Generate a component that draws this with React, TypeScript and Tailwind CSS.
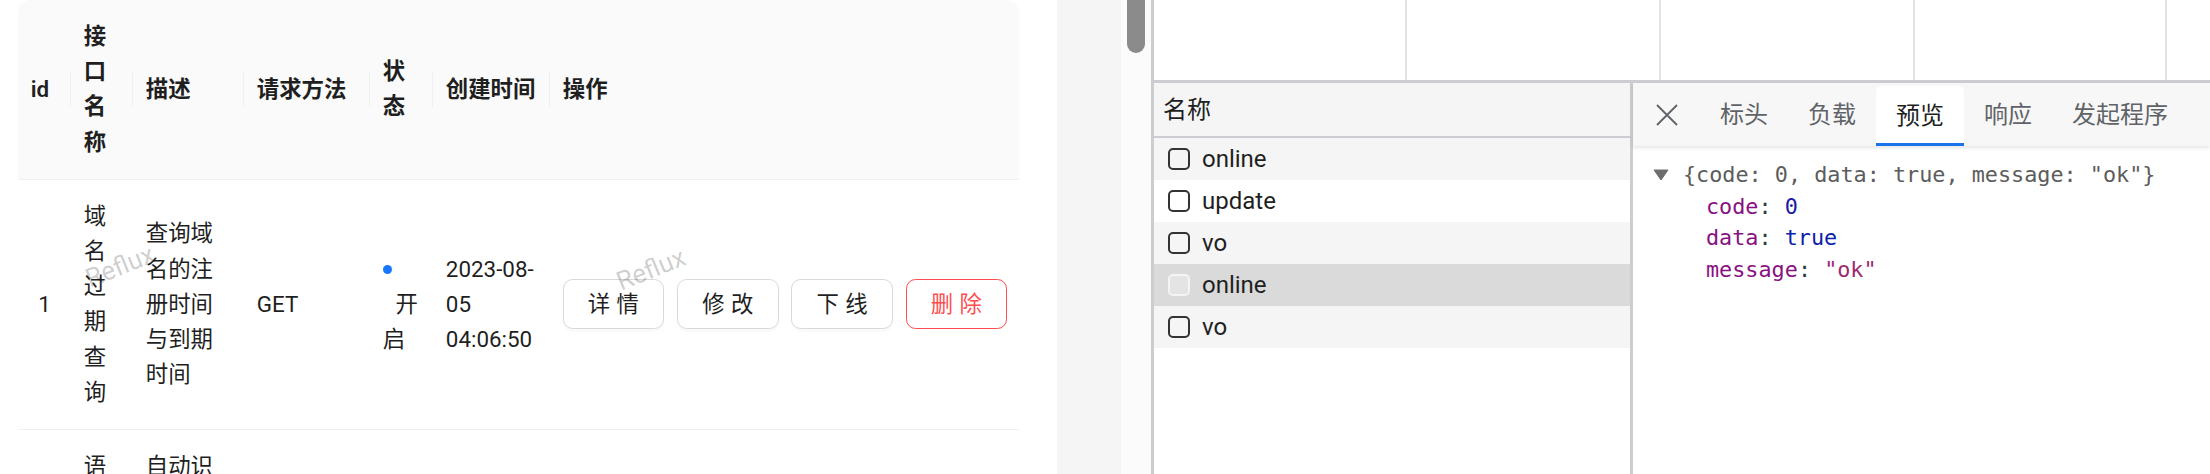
import React from 'react';

type Row = {
  id: number;
  name: string;
  desc: string;
  method: string;
  status: string;
  created: string;
};

const rows: Row[] = [
  { id: 1, name: '域名过期查询', desc: '查询域名的注册时间与到期时间', method: 'GET', status: '开启', created: '2023-08-05 04:06:50' },
  { id: 2, name: '语音转写服务', desc: '自动识别音频中的语音并转写为文字', method: 'POST', status: '开启', created: '2023-08-05 04:07:12' },
];

const headers = ['id', '接口名称', '描述', '请求方法', '状态', '创建时间', '操作'];

const thBase =
  "relative bg-[#fafafa] text-left font-semibold px-[12.8px] py-[19px] border-b border-[#f0f0f0] before:content-[''] before:absolute before:right-0 before:top-1/2 before:-translate-y-1/2 before:w-px before:h-[36px] before:bg-[#f0f0f0]";

const tdBase = 'px-[12.8px] py-[19px] border-b border-[#f0f0f0]';

const btnBase = 'shrink-0 whitespace-nowrap h-[50px] px-[24px] rounded-[9.6px] border bg-white tracking-[0.4px]';

const ApiTable: React.FC = () => (
  <table className="table-fixed border-separate border-spacing-0 w-[1001px] text-[22.4px] leading-[35.2px] text-[#1f1f1f]">
    <colgroup>
      <col className="w-[53px]" />
      <col className="w-[62px]" />
      <col className="w-[111px]" />
      <col className="w-[126px]" />
      <col className="w-[63px]" />
      <col className="w-[117px]" />
      <col className="w-[469px]" />
    </colgroup>
    <thead>
      <tr>
        {headers.map((h, i) => (
          <th
            key={h}
            className={`${thBase} ${i === 0 ? 'rounded-tl-[12.8px]' : ''} ${i === headers.length - 1 ? 'rounded-tr-[12.8px] before:hidden' : ''}`}
          >
            {h}
          </th>
        ))}
      </tr>
    </thead>
    <tbody>
      {rows.map((r) => (
        <tr key={r.id}>
          <td className={`${tdBase} text-center`}>{r.id}</td>
          <td className={tdBase}>{r.name}</td>
          <td className={tdBase}>{r.desc}</td>
          <td className={tdBase}>{r.method}</td>
          <td className={tdBase}>
            <span className="inline-block w-[9.6px] h-[9.6px] rounded-full bg-[#1677ff] align-middle relative -top-px" />
            <span className="ml-[12.8px]">{r.status}</span>
          </td>
          <td className={tdBase}>{r.created}</td>
          <td className={tdBase}>
            <div className="flex gap-[12.8px]">
              {['详 情', '修 改', '下 线'].map((t) => (
                <button
                  key={t}
                  className={`${btnBase} border-[#d9d9d9] text-[#1f1f1f] shadow-[0_3px_0_rgba(0,0,0,0.02)]`}
                >
                  {t}
                </button>
              ))}
              <button className={`${btnBase} border-[#ff4d4f] text-[#ff4d4f]`}>删 除</button>
            </div>
          </td>
        </tr>
      ))}
    </tbody>
  </table>
);

const PageArea: React.FC = () => (
  <div className="relative w-[1057px] h-full shrink-0 bg-white pl-[18px]">
    <ApiTable />
    {/* watermark */}
    <span className="absolute left-[84px] top-[251px] -rotate-[22deg] text-[26px] leading-[30px] text-black/20 pointer-events-none">
      Reflux
    </span>
    <span className="absolute left-[615px] top-[254px] -rotate-[22deg] text-[26px] leading-[30px] text-black/20 pointer-events-none">
      Reflux
    </span>
  </div>
);

const names = ['online', 'update', 'vo', 'online', 'vo'];

const RequestList: React.FC = () => (
  <div className="w-[479px] shrink-0 h-full border-r-[3px] border-[#cbcdd1] flex flex-col">
    <div className="h-[55px] shrink-0 bg-[#f5f5f5] border-b-2 border-[#cbcdd1] flex items-center pl-[9px] text-[24px] text-[#1f1f1f]">
      名称
    </div>
    {names.map((n, i) => {
      const selected = i === 3;
      const bg = selected ? 'bg-[#dadada]' : i % 2 === 0 ? 'bg-[#f5f5f5]' : 'bg-white';
      return (
        <div key={i} className={`h-[42px] shrink-0 flex items-center pl-[14px] gap-[12px] ${bg}`}>
          <span
            className={`w-[22px] h-[22px] rounded-[5px] border-2 ${selected ? 'border-[#f4f4f4] bg-[#e4e4e4]' : 'border-[#333333] bg-transparent'}`}
          />
          <span className="text-[24px] text-[#1f1f1f] leading-[42px]">{n}</span>
        </div>
      );
    })}
  </div>
);

const tabs = ['标头', '负载', '预览', '响应', '发起程序'];

const Preview: React.FC = () => (
  <div className="flex-1 min-w-0 h-full flex flex-col">
    <div className="relative z-10 h-[63px] shrink-0 bg-[#f7f7f7] shadow-[0_2px_4px_rgba(0,0,0,0.1)] flex items-end">
      <div className="w-[67px] h-full flex items-center justify-center">
        <svg width="24" height="24" viewBox="0 0 24 24" fill="none">
          <path d="M2 2L22 22M22 2L2 22" stroke="#5f6368" strokeWidth="1.8" />
        </svg>
      </div>
      {tabs.map((t) => {
        const active = t === '预览';
        return (
          <div
            key={t}
            className={`h-[60px] px-[20px] flex items-center text-[24px] ${active ? 'bg-white rounded-t-[6px] border-b-[3px] border-[#1a73e8] text-[#1f1f1f] pt-[3px]' : 'text-[#5f6368] pb-[3px]'}`}
          >
            {t}
          </div>
        );
      })}
    </div>
    <div className="flex-1 bg-white pt-[13px] font-['DejaVu_Sans_Mono',monospace] text-[21.8px] leading-[31.7px] whitespace-pre">
      <div className="flex items-center pl-[20px]">
        <svg width="16" height="12" viewBox="0 0 16 12" className="mr-[14px]">
          <path d="M1 1H15L8 11Z" fill="#6e6e6e" stroke="#6e6e6e" strokeLinejoin="round" />
        </svg>
        <span className="text-[#5c5c5c]">{'{code: 0, data: true, message: "ok"}'}</span>
      </div>
      <div className="pl-[73px]">
        <span className="text-[#881280]">code</span>
        <span className="text-[#303942]">: </span>
        <span className="text-[#1a1aa6]">0</span>
      </div>
      <div className="pl-[73px]">
        <span className="text-[#881280]">data</span>
        <span className="text-[#303942]">: </span>
        <span className="text-[#0d22aa]">true</span>
      </div>
      <div className="pl-[73px]">
        <span className="text-[#881280]">message</span>
        <span className="text-[#303942]">: </span>
        <span className="text-[#9c2a6f]">"ok"</span>
      </div>
    </div>
  </div>
);

const DevTools: React.FC = () => (
  <div className="flex-1 min-w-0 h-full flex flex-col">
    <div className="h-[83px] shrink-0 flex border-b-[3px] border-[#cbcdd1] bg-white">
      <div className="w-[253px] h-full border-r-2 border-[#e4e4e4]" />
      <div className="w-[254px] h-full border-r-2 border-[#e4e4e4]" />
      <div className="w-[254px] h-full border-r-2 border-[#e4e4e4]" />
      <div className="w-[252px] h-full border-r-2 border-[#e4e4e4]" />
    </div>
    <div className="flex-1 min-h-0 flex">
      <RequestList />
      <Preview />
    </div>
  </div>
);

const App: React.FC = () => (
  <div className="flex w-[2210px] h-[474px] overflow-hidden bg-white font-['Roboto','Noto_Sans_CJK_SC',sans-serif]">
    <PageArea />
    <div className="w-[64px] h-full shrink-0 bg-[#f5f5f5]" />
    <div className="w-[30px] h-full shrink-0 bg-[#fbfbfb] px-[6px]">
      <div className="h-[53px] rounded-b-[9px] bg-[#8b8b8b]" />
    </div>
    <div className="w-[3px] h-full shrink-0 bg-[#cbcdd1]" />
    <DevTools />
  </div>
);

export default App;
